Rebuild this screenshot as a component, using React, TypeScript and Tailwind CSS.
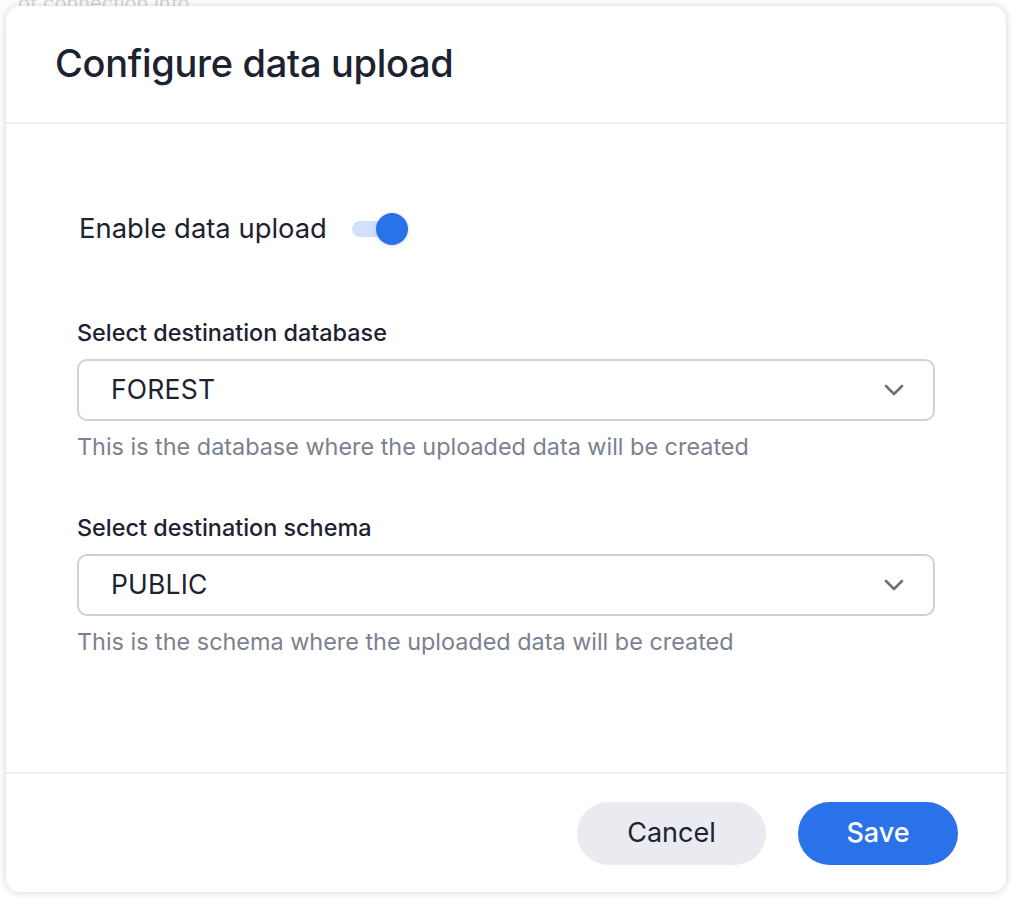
import React from "react";

function Chevron() {
  return (
    <svg width="20" height="12" viewBox="0 0 20 12" fill="none">
      <path d="M2 2l8 8 8-8" stroke="#6b7280" strokeWidth="2.6" strokeLinecap="round" strokeLinejoin="round" />
    </svg>
  );
}

function Field({ label, value, help }: { label: string; value: string; help: string }) {
  return (
    <div className="flex flex-col">
      <div className="text-[23.4px] leading-[28px] font-medium text-[#1d2230]">{label}</div>
      <div className="mt-[12px] h-[62px] w-[858px] rounded-[10px] border-2 border-[#cdd1d9] flex items-center justify-between pl-[32px] pr-[29px]">
        <span className="text-[26.5px] text-[#1d2230] tracking-[0.2px]">{value}</span>
        <Chevron />
      </div>
      <div className="mt-[12px] text-[23.4px] leading-[28px] text-[#7b818e]">{help}</div>
    </div>
  );
}

export default function App() {
  return (
    <div className="relative w-[1012px] h-[898px] bg-white overflow-hidden" style={{ fontFamily: "Inter, 'Noto Sans', sans-serif" }}>
      <div className="absolute left-[18px] top-[-12px] text-[20px] text-[#d4d6db]">of connection info</div>
      <div className="absolute left-[6px] top-[6px] w-[1000px] h-[886px] bg-white rounded-[14px] shadow-[0_0_8px_rgba(0,0,0,0.18)] flex flex-col">
        <div className="h-[118px] flex items-center pl-[49px] border-b-2 border-[#eceef2] shrink-0">
          <h1 className="text-[38px] font-medium text-[#1d2230] tracking-[-0.3px] -mt-[2px]">Configure data upload</h1>
        </div>
        <div className="flex-1 flex flex-col pl-[71px] pt-[85px]">
          <div className="flex items-center h-[40px]">
            <span className="text-[27.4px] text-[#1d2230] pl-[2px]">Enable data upload</span>
            <div className="ml-[25px] relative w-[56px] h-[32px] flex items-center">
              <div className="w-[44px] h-[16px] rounded-full bg-[#d3e0fb]" />
              <div className="absolute left-[24px] top-0 w-[32px] h-[32px] rounded-full bg-[#2a72ea] shadow-[0_1px_4px_rgba(0,0,0,0.15)]" />
            </div>
          </div>
          <div className="mt-[70px] flex flex-col gap-[53px]">
            <Field label="Select destination database" value="FOREST" help="This is the database where the uploaded data will be created" />
            <Field label="Select destination schema" value="PUBLIC" help="This is the schema where the uploaded data will be created" />
          </div>
        </div>
        <div className="h-[120px] border-t-2 border-[#eceef2] flex items-center justify-end pr-[48px] gap-[32px] shrink-0">
          <button className="h-[63px] w-[189px] rounded-full bg-[#e9ebf0] text-[27px] text-[#1d2230]">Cancel</button>
          <button className="h-[63px] w-[160px] rounded-full bg-[#2a72ea] text-[27px] font-medium text-white">Save</button>
        </div>
      </div>
    </div>
  );
}
